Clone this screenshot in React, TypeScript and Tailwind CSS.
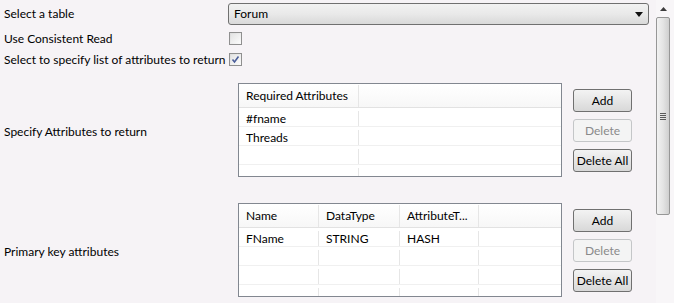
import React from 'react';

const font = { fontFamily: 'Lato, "Open Sans", sans-serif' };

const Checkbox: React.FC<{ checked?: boolean }> = ({ checked }) => (
  <div className="ml-px flex h-[13px] w-[13px] items-center justify-center border border-[#8f8f8f] bg-gradient-to-br from-[#dcdcdc] to-[#fbfbfb]">
    <div className="flex h-[9px] w-[9px] items-center justify-center bg-gradient-to-br from-[#e4e4e4] to-[#fafafa]">
      {checked && (
        <svg width="9" height="9" viewBox="0 0 9 9">
          <path d="M1.5 4.5 L3.5 7 L7.5 1.5" fill="none" stroke="#4b5e9a" strokeWidth="1.6" />
        </svg>
      )}
    </div>
  </div>
);

const Button: React.FC<{ label: string; disabled?: boolean }> = ({ label, disabled }) =>
  disabled ? (
    <div className="flex h-[23px] w-[59px] items-center justify-center rounded-[3px] border border-[#c4c6c8] bg-[#f4f4f4] pt-px text-[#8a8a8a]">
      {label}
    </div>
  ) : (
    <div className="flex h-[23px] w-[59px] items-center justify-center rounded-[3px] border border-[#707070] bg-gradient-to-b from-[#f3f3f3] via-[#e6e6e6] to-[#d8d8d8] pt-px text-black">
      {label}
    </div>
  );

const Buttons = () => (
  <div className="ml-[11px] mt-[6px] flex flex-col gap-[7px]">
    <Button label="Add" />
    <Button label="Delete" disabled />
    <Button label="Delete All" />
  </div>
);

const Table: React.FC<{ cols: { title: string; w: number }[]; rows: string[][] }> = ({ cols, rows }) => {
  const body = [...rows];
  while (body.length < 4) body.push([]);
  const cells = (vals: string[], header: boolean) => (
    <>
      {cols.map((c, i) => (
        <div
          key={i}
          className="shrink-0 overflow-hidden whitespace-nowrap border-r border-[#e6e6e6] pl-[7px]"
          style={{ width: c.w }}
        >
          {header ? c.title : vals[i] ?? ''}
        </div>
      ))}
      <div className="flex-1" />
    </>
  );
  return (
    <div className="h-[94px] w-[324px] overflow-hidden border border-[#828790] bg-white">
      <div className="flex h-[24px] items-center border-b border-[#e2e2e2] bg-gradient-to-b from-white to-[#f7f7f7] pt-px [&>div]:flex [&>div]:h-full [&>div]:items-center">
        {cells([], true)}
      </div>
      {body.map((r, i) => (
        <div
          key={i}
          className="flex h-[19px] items-center border-b border-[#f0f0f0] pt-[3px] [&>div]:flex [&>div]:h-full [&>div]:items-center"
        >
          {cells(r, false)}
        </div>
      ))}
    </div>
  );
};

const Scrollbar = () => (
  <div className="flex h-full w-[18px] flex-col bg-[#f8f6f8]">
    <div className="flex h-[17px] items-center justify-center pr-[4px]">
      <svg width="7" height="4" viewBox="0 0 7 4">
        <path d="M3.5 0 L7 4 L0 4 Z" fill="#3c3c3c" />
      </svg>
    </div>
    <div className="flex h-[198px] w-[14px] items-center justify-center rounded-[2px] border border-[#979797] bg-gradient-to-r from-[#f2f2f2] via-[#e4e4e4] to-[#cfcfcf]">
      <div className="flex flex-col gap-[1px]">
        <div className="h-px w-[6px] bg-[#5a5a5a]" />
        <div className="h-px w-[6px] bg-[#5a5a5a]" />
        <div className="h-px w-[6px] bg-[#5a5a5a]" />
        <div className="h-px w-[6px] bg-[#5a5a5a]" />
      </div>
    </div>
  </div>
);

export default function App() {
  return (
    <div
      className="flex h-[303px] w-[674px] overflow-hidden bg-[#f6f3f6] text-[12px] leading-none text-black"
      style={font}
    >
      <div className="flex w-[656px] flex-col">
        <div className="mt-[3px] flex h-[22px] items-center">
          <div className="w-[228px] pl-[4px]">Select a table</div>
          <div className="flex h-[22px] w-[421px] items-center justify-between rounded-[3px] border border-[#707070] bg-gradient-to-b from-[#f2f2f2] via-[#e9e9e9] to-[#d9d9d9] pl-[5px] pr-[5px]">
            <span>Forum</span>
            <svg width="8" height="5" viewBox="0 0 8 5">
              <path d="M0 0 L8 0 L4 5 Z" fill="#111" />
            </svg>
          </div>
        </div>
        <div className="mt-[3px] flex h-[21px] items-center">
          <div className="w-[228px] pl-[4px]">Use Consistent Read</div>
          <Checkbox />
        </div>
        <div className="flex h-[21px] items-center">
          <div className="w-[228px] whitespace-nowrap pl-[4px]">Select to specify list of attributes to return</div>
          <Checkbox checked />
        </div>
        <div className="mt-[13px] flex items-start">
          <div className="flex h-[94px] w-[238px] items-center pl-[4px] pt-[3px]">Specify Attributes to return</div>
          <Table cols={[{ title: 'Required Attributes', w: 120 }]} rows={[['#fname'], ['Threads']]} />
          <Buttons />
        </div>
        <div className="mt-[26px] flex items-start">
          <div className="flex h-[94px] w-[238px] items-center pl-[4px] pt-[3px]">Primary key attributes</div>
          <Table
            cols={[
              { title: 'Name', w: 80 },
              { title: 'DataType', w: 81 },
              { title: 'AttributeT...', w: 79 },
            ]}
            rows={[['FName', 'STRING', 'HASH']]}
          />
          <Buttons />
        </div>
      </div>
      <Scrollbar />
    </div>
  );
}
